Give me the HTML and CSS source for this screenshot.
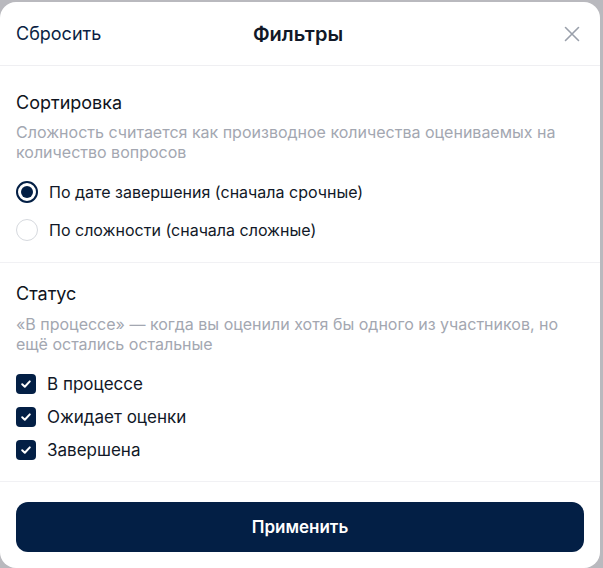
FILE: index.html
```html
<!DOCTYPE html>
<html lang="ru">
<head>
  <meta charset="UTF-8">
  <title>Фильтры</title>
  <meta name="viewport" content="width=device-width, initial-scale=1.0">
  <link rel="stylesheet" href="styles.css">
</head>
<body>
  <div class="modal">
    <div class="modal-header">
      <button class="reset-button">Сбросить</button>
      <h2>Фильтры</h2>
      <button class="close-button" aria-label="Закрыть">
        <svg width="16" height="16" viewBox="0 0 16 16" fill="none">
          <path d="M1.5 1.5L14.5 14.5M14.5 1.5L1.5 14.5" stroke="#9aa0ab" stroke-width="1.6" stroke-linecap="round"/>
        </svg>
      </button>
    </div>

    <div class="section section-sort">
      <div class="section-title">Сортировка</div>
      <div class="section-hint">Сложность считается как производное количества оцениваемых на количество вопросов</div>
      <div class="options options-radio">
        <label class="option">
          <span class="radio checked"></span>
          По дате завершения (сначала срочные)
        </label>
        <label class="option">
          <span class="radio"></span>
          По сложности (сначала сложные)
        </label>
      </div>
    </div>

    <div class="section section-status">
      <div class="section-title">Статус</div>
      <div class="section-hint">«В процессе» — когда вы оценили хотя бы одного из участников, но ещё остались остальные</div>
      <div class="options options-check">
        <label class="option">
          <span class="checkbox"><svg width="12" height="12" viewBox="0 0 12 12" fill="none"><path d="M2.2 6.3L4.8 8.8L9.8 3.4" stroke="#fff" stroke-width="2" stroke-linecap="round" stroke-linejoin="round"/></svg></span>
          В процессе
        </label>
        <label class="option">
          <span class="checkbox"><svg width="12" height="12" viewBox="0 0 12 12" fill="none"><path d="M2.2 6.3L4.8 8.8L9.8 3.4" stroke="#fff" stroke-width="2" stroke-linecap="round" stroke-linejoin="round"/></svg></span>
          Ожидает оценки
        </label>
        <label class="option">
          <span class="checkbox"><svg width="12" height="12" viewBox="0 0 12 12" fill="none"><path d="M2.2 6.3L4.8 8.8L9.8 3.4" stroke="#fff" stroke-width="2" stroke-linecap="round" stroke-linejoin="round"/></svg></span>
          Завершена
        </label>
      </div>
    </div>

    <div class="modal-footer">
      <button class="apply-button">Применить</button>
    </div>
  </div>
</body>
</html>
```

FILE: styles.css
```css
body {
  margin: 0;
  font-family: Inter, 'Noto Sans', sans-serif;
  background-color: #b9b9be;
  color: #111827;
}

.modal {
  width: 600px;
  margin-top: 2px;
  background-color: #fff;
  border-radius: 16px;
  display: flex;
  flex-direction: column;
}

.modal-header {
  height: 63px;
  flex-shrink: 0;
  border-bottom: 1px solid #efeff2;
  display: flex;
  align-items: center;
  justify-content: space-between;
  padding: 0 16px;
}

.modal-header h2 {
  margin: 0;
  font-size: 20px;
  font-weight: 600;
  color: #111827;
}

.reset-button {
  background: none;
  border: none;
  padding: 0;
  font-family: inherit;
  font-size: 18px;
  color: #0b1f44;
  cursor: pointer;
  width: 100px;
  text-align: left;
}

.close-button {
  background: none;
  border: none;
  padding: 0;
  width: 100px;
  display: flex;
  justify-content: flex-end;
  margin-right: 4px;
  cursor: pointer;
}

.section {
  padding: 19px 16px 20px;
  border-bottom: 1px solid #f1f1f4;
}

.section-sort {
  padding-top: 25px;
}

.section-status {
  padding-bottom: 19px;
}

.section-title {
  font-size: 18px;
  font-weight: 400;
  line-height: 24px;
  color: #0f1420;
}

.section-hint {
  margin-top: 7px;
  font-size: 16px;
  line-height: 20px;
  color: #a3a7b1;
}

.section-status .section-hint {
  margin-top: 8px;
}

.options {
  display: flex;
  flex-direction: column;
  margin-top: 18px;
}

.options-radio {
  gap: 14px;
}

.options-check {
  gap: 9px;
}

.option {
  display: flex;
  align-items: center;
  gap: 11px;
  font-size: 16px;
  line-height: 24px;
  color: #111827;
}

.options-check .option {
  font-size: 17px;
}

.radio {
  width: 22px;
  height: 22px;
  box-sizing: border-box;
  border: 1px solid #d6d9de;
  border-radius: 50%;
  display: flex;
  align-items: center;
  justify-content: center;
}

.radio.checked {
  border: 2px solid #031f45;
}

.radio.checked::after {
  content: "";
  width: 12px;
  height: 12px;
  border-radius: 50%;
  background-color: #031f45;
}

.checkbox {
  width: 20px;
  height: 20px;
  border-radius: 4px;
  background-color: #031f45;
  display: flex;
  align-items: center;
  justify-content: center;
}

.modal-footer {
  padding: 20px 16px 16px;
}

.apply-button {
  width: 100%;
  height: 50px;
  border: none;
  border-radius: 12px;
  background-color: #031f45;
  color: #fff;
  font-family: inherit;
  font-size: 17px;
  font-weight: 600;
  cursor: pointer;
}
```
